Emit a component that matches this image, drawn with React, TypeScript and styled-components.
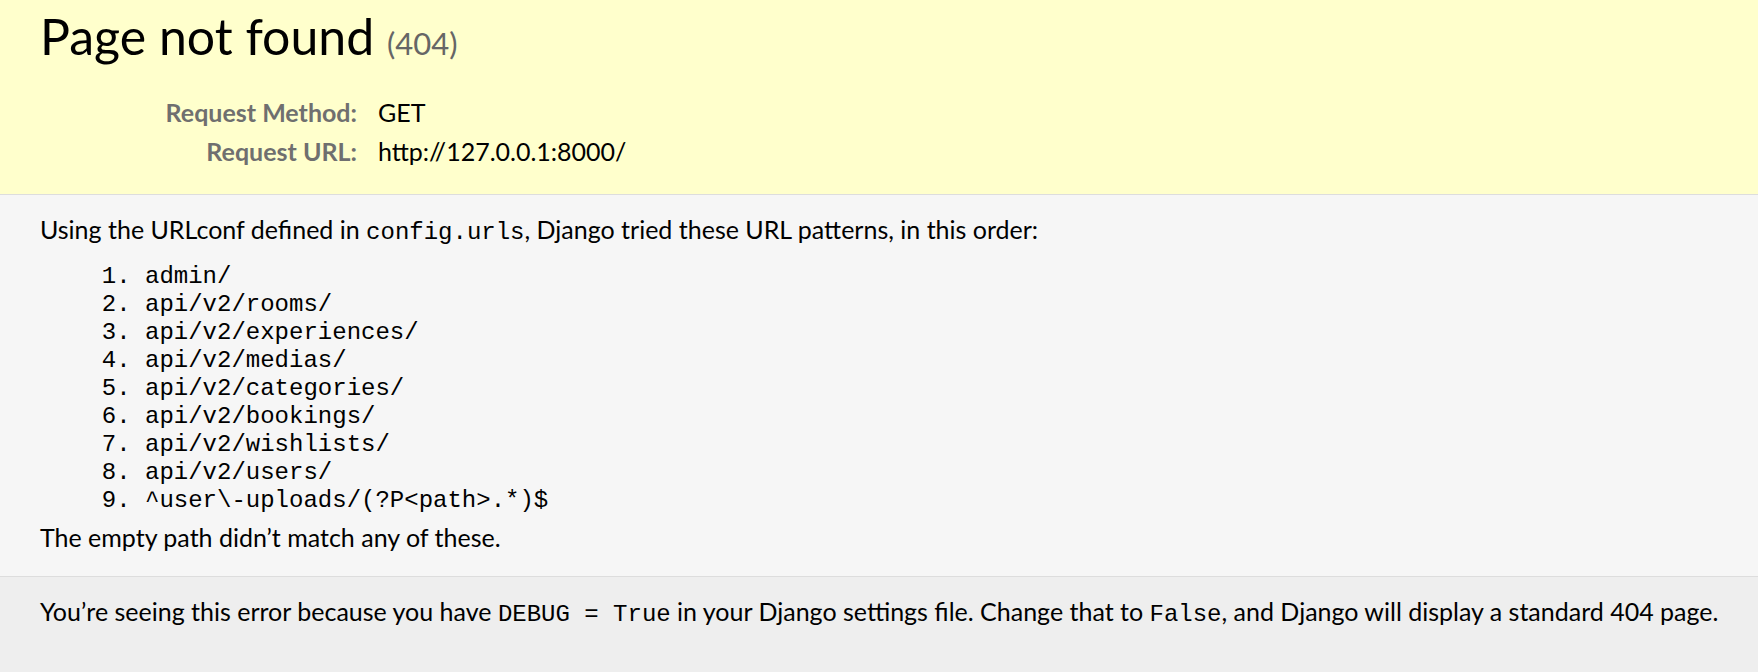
import styled, { createGlobalStyle } from "styled-components";

const GlobalStyle = createGlobalStyle`
  html, body {
    margin: 0;
    padding: 0;
  }
  body {
    background: #eee;
    color: #000;
    font-family: Lato, "Noto Sans", sans-serif;
    font-size: 25px;
    line-height: 28px;
  }
`;

const mono = `"Liberation Mono", "DejaVu Sans Mono", monospace`;

const Summary = styled.header`
  background: #ffc;
  padding: 8px 40px 24px;
  border-bottom: 1px solid #ddd;
`;

const Title = styled.h1`
  margin: 0 0 21px;
  font-size: 50px;
  line-height: 56px;
  font-weight: normal;
`;

const Status = styled.small`
  font-size: 62%;
  color: #666;
  font-weight: normal;
`;

const Meta = styled.table`
  border: none;
  border-collapse: collapse;
`;

const Row = styled.tr`
  height: 39px;
`;

const Th = styled.th`
  width: 314px;
  padding: 0 18px 0 3px;
  text-align: right;
  vertical-align: middle;
  color: #6f6f6f;
  font-weight: bold;
`;

const Td = styled.td`
  padding: 0 3px;
  vertical-align: middle;
`;

const Info = styled.main`
  background: #f6f6f6;
  padding: 20px 40px 25px;
  border-bottom: 1px solid #ddd;
`;

const Text = styled.p`
  margin: 0;
  white-space: nowrap;
`;

const Code = styled.code`
  font-family: ${mono};
  font-size: 24px;
`;

const Patterns = styled.ol`
  margin: 16px 0 8px;
  padding-left: 105px;
  font-family: ${mono};
  font-size: 24px;
`;

const Pattern = styled.li`
  line-height: 28px;
`;

const Explanation = styled.footer`
  background: #eee;
  padding: 20px 20px 20px 40px;
  min-height: 55px;
`;

const patterns = [
  "admin/",
  "api/v2/rooms/",
  "api/v2/experiences/",
  "api/v2/medias/",
  "api/v2/categories/",
  "api/v2/bookings/",
  "api/v2/wishlists/",
  "api/v2/users/",
  "^user\\-uploads/(?P<path>.*)$",
];

export default function App() {
  return (
    <>
      <GlobalStyle />
      <Summary>
        <Title>
          Page not found <Status>(404)</Status>
        </Title>
        <Meta>
          <tbody>
            <Row>
              <Th>Request Method:</Th>
              <Td>GET</Td>
            </Row>
            <Row>
              <Th>Request URL:</Th>
              <Td>http://127.0.0.1:8000/</Td>
            </Row>
          </tbody>
        </Meta>
      </Summary>
      <Info>
        <Text>
          Using the URLconf defined in <Code>config.urls</Code>, Django tried
          these URL patterns, in this order:
        </Text>
        <Patterns>
          {patterns.map((p) => (
            <Pattern key={p}>{p}</Pattern>
          ))}
        </Patterns>
        <Text>The empty path didn’t match any of these.</Text>
      </Info>
      <Explanation>
        <Text>
          You’re seeing this error because you have <Code>DEBUG = True</Code>{" "}
          in your Django settings file. Change that to <Code>False</Code>, and
          Django will display a standard 404 page.
        </Text>
      </Explanation>
    </>
  );
}
